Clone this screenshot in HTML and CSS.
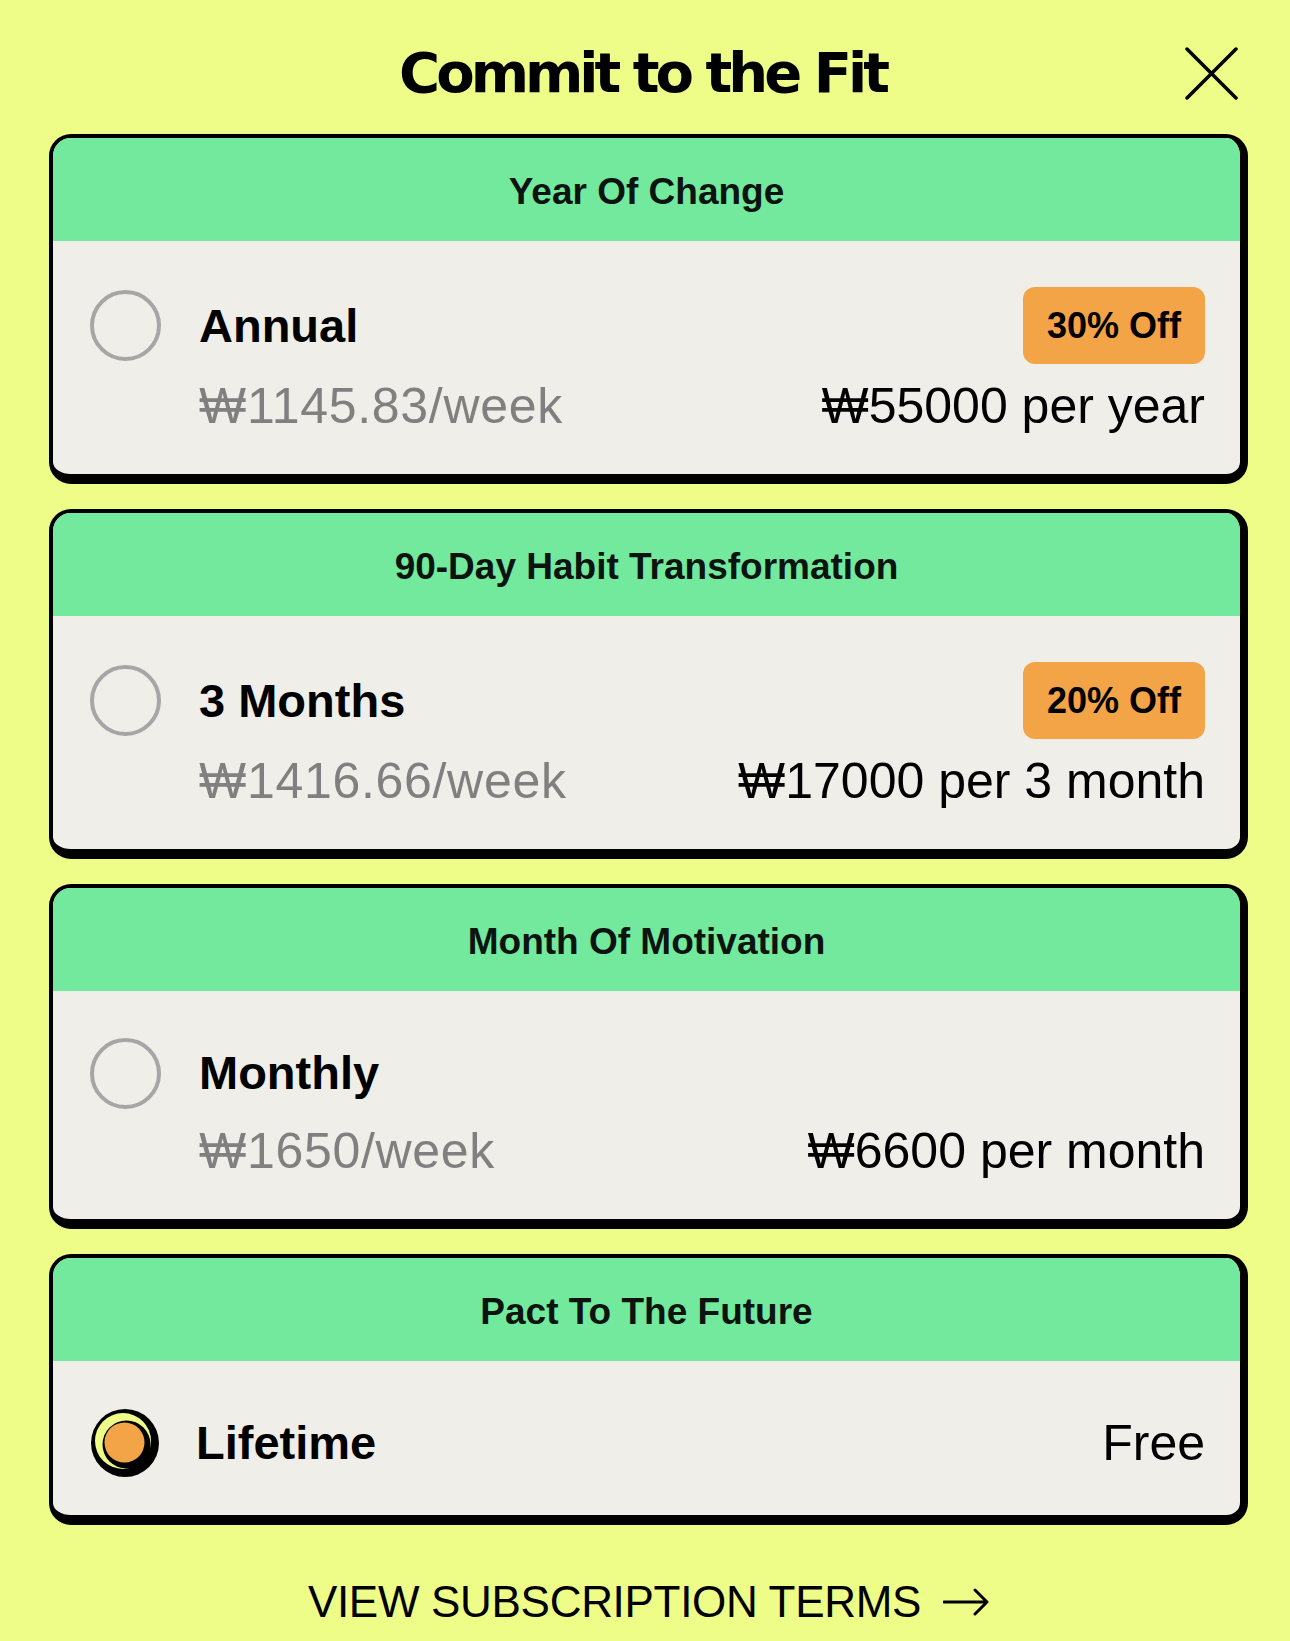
FILE: index.html
```html
<!DOCTYPE html>
<html lang="en">
<head>
  <meta charset="UTF-8">
  <title>Commit to the Fit</title>
  <link rel="stylesheet" href="styles.css">
</head>
<body>

  <div class="sheet">
    <div class="top-bar">
      <span></span>
      <h1 class="title">Commit to the Fit</h1>
      <button class="close-btn" aria-label="Close">
        <svg width="53" height="53" viewBox="0 0 53 53">
          <path d="M2 2 L51 51 M51 2 L2 51" stroke="#000" stroke-width="3.5" stroke-linecap="round" fill="none"/>
        </svg>
      </button>
    </div>

    <ul class="plans">
      <li class="plan">
        <div class="plan-head">Year Of Change</div>
        <div class="plan-body">
          <span class="radio"></span>
          <div class="plan-row">
            <span class="plan-name">Annual</span>
            <span class="badge">30% Off</span>
          </div>
          <div class="plan-row price-row">
            <span class="per-week">₩1145.83/week</span>
            <span class="total">₩55000 per year</span>
          </div>
        </div>
      </li>

      <li class="plan">
        <div class="plan-head">90-Day Habit Transformation</div>
        <div class="plan-body">
          <span class="radio"></span>
          <div class="plan-row">
            <span class="plan-name">3 Months</span>
            <span class="badge">20% Off</span>
          </div>
          <div class="plan-row price-row">
            <span class="per-week">₩1416.66/week</span>
            <span class="total">₩17000 per 3 month</span>
          </div>
        </div>
      </li>

      <li class="plan">
        <div class="plan-head">Month Of Motivation</div>
        <div class="plan-body">
          <span class="radio"></span>
          <div class="plan-row">
            <span class="plan-name">Monthly</span>
          </div>
          <div class="plan-row price-row">
            <span class="per-week">₩1650/week</span>
            <span class="total">₩6600 per month</span>
          </div>
        </div>
      </li>

      <li class="plan">
        <div class="plan-head">Pact To The Future</div>
        <div class="plan-body plan-body-single">
          <span class="radio radio-on">
            <svg width="72" height="72" viewBox="0 0 72 72">
              <circle cx="36" cy="36" r="34" fill="#000"/>
              <circle cx="34" cy="34" r="28" fill="#edfd87"/>
              <circle cx="37.5" cy="37.5" r="24" fill="#000"/>
              <circle cx="35.5" cy="35.5" r="20" fill="#f2a446"/>
            </svg>
          </span>
          <div class="plan-row">
            <span class="plan-name lifetime">Lifetime</span>
            <span class="total">Free</span>
          </div>
        </div>
      </li>
    </ul>

    <a class="terms" href="#">
      VIEW SUBSCRIPTION TERMS
      <svg width="46" height="30" viewBox="0 0 46 30">
        <path d="M1 15 H44 M32 3 L44 15 L32 27" stroke="#000" stroke-width="3" stroke-linecap="round" stroke-linejoin="round" fill="none"/>
      </svg>
    </a>
  </div>

</body>
</html>
```

FILE: styles.css
```css
html {
  background: #edfd87;
}

body {
  margin: 0;
  font-family: "Liberation Sans", "DejaVu Sans", Arial, sans-serif;
  color: #000;
}

.sheet {
  padding: 40px 42px 0 49px;
}

/* header */
.top-bar {
  display: grid;
  grid-template-columns: 1fr auto 1fr;
  align-items: center;
  height: 66px;
  margin-bottom: 28px;
}

.title {
  margin: 0 12px 0 0;
  font-family: "DejaVu Sans", sans-serif;
  font-weight: 700;
  font-size: 56px;
  letter-spacing: -4px;
  line-height: 66px;
}

.close-btn {
  justify-self: end;
  margin-right: 10px;
  padding: 0;
  border: none;
  background: none;
  cursor: pointer;
  display: flex;
}

/* plans */
.plans {
  margin: 0;
  padding: 0;
  list-style: none;
  display: flex;
  flex-direction: column;
  gap: 25px;
}

.plan {
  border: 4px solid #000;
  border-right-width: 8px;
  border-bottom-width: 10px;
  border-radius: 22px;
  overflow: hidden;
  background: #efeee9;
}

.plan-head {
  height: 103px;
  box-sizing: border-box;
  padding-top: 6px;
  display: flex;
  align-items: center;
  justify-content: center;
  background: #72e99c;
  font-weight: 700;
  font-size: 37px;
  line-height: 1.1;
  color: #0d1410;
}

.plan-body {
  display: grid;
  grid-template-columns: 72px 1fr;
  column-gap: 38px;
  row-gap: 14px;
  padding: 46px 35px 40px 36px;
}

.plan-body-single {
  padding-bottom: 36px;
}

.radio {
  width: 72px;
  height: 72px;
  align-self: center;
  display: flex;
  align-items: center;
  justify-content: center;
}

.radio:before {
  content: '';
  width: 71px;
  height: 71px;
  box-sizing: border-box;
  border: 4px solid #a6a6a6;
  border-radius: 50%;
}

.radio-on:before {
  display: none;
}

.plan-row {
  display: flex;
  align-items: center;
  justify-content: space-between;
  min-height: 72px;
  line-height: 1.1;
}

.price-row {
  grid-column: 2;
  min-height: 56px;
}

.plan-name {
  font-weight: 700;
  font-size: 47px;
}

.lifetime {
  margin-left: -3px;
}

.badge {
  background: #f2a446;
  border-radius: 12px;
  padding: 0 24px;
  height: 77px;
  display: flex;
  align-items: center;
  font-weight: 700;
  font-size: 36px;
}

.per-week {
  font-size: 50px;
  letter-spacing: 0.7px;
  color: #808080;
}

.total {
  font-size: 50px;
  color: #000;
}

/* footer link */
.terms {
  margin-top: 49px;
  height: 56px;
  display: flex;
  align-items: center;
  justify-content: center;
  gap: 22px;
  font-size: 44px;
  letter-spacing: -0.3px;
  color: #000;
  text-decoration: none;
}
```
